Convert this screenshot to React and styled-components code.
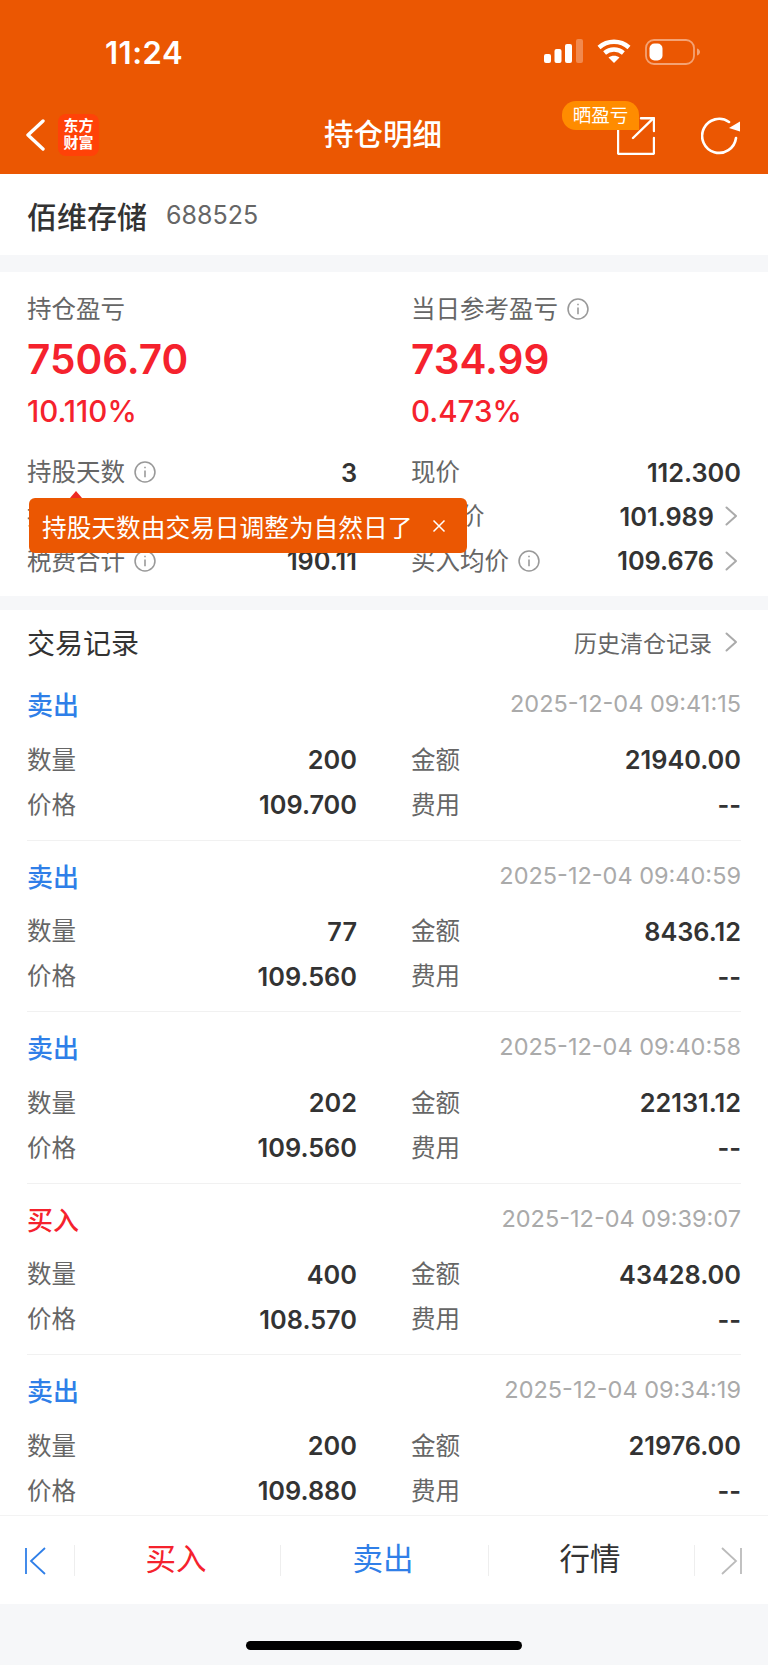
import React from 'react';
import styled, { createGlobalStyle } from 'styled-components';

const GlobalStyle = createGlobalStyle`
  html, body {
    margin: 0;
    padding: 0;
    background: #f6f7f9;
    font-family: Inter, "Noto Sans CJK SC", sans-serif;
  }
  * { box-sizing: border-box; }
`;

const Page = styled.div`
  width: 768px;
  height: 1665px;
  overflow: hidden;
  background: #f6f7f9;
  display: flex;
  flex-direction: column;
`;

const Header = styled.header`
  height: 174px;
  background: #eb5702;
  color: #fff;
  flex: none;
`;

const StatusBar = styled.div`
  height: 94px;
  display: flex;
  align-items: flex-start;
  justify-content: space-between;
  padding: 36px 67px 0 105px;
`;

const Clock = styled.div`
  font-size: 31px;
  line-height: 34px;
  font-weight: 600;
  letter-spacing: 0.5px;
`;

const StatusIcons = styled.div`
  display: flex;
  align-items: flex-start;
  gap: 14px;
  padding-top: 3px;
`;

const Nav = styled.div`
  height: 80px;
  display: grid;
  grid-template-columns: 1fr auto 1fr;
  align-items: center;
  padding: 0 27px 0 25px;
`;

const NavLeft = styled.div`
  display: flex;
  align-items: center;
  gap: 13px;
  margin-top: 2px;
`;

const Logo = styled.div`
  width: 41px;
  height: 42px;
  border-radius: 8px;
  background: #ff4208;
  color: #fff;
  font-size: 15px;
  line-height: 17px;
  font-weight: 700;
  text-align: center;
  padding-top: 3px;
`;

const Title = styled.div`
  font-size: 29.5px;
  line-height: 40px;
  font-weight: 500;
`;

const NavRight = styled.div`
  display: flex;
  justify-content: flex-end;
  align-items: center;
  gap: 46px;
  margin-top: 4px;
`;

const ShareBox = styled.div`
  position: relative;
  width: 38px;
  height: 38px;
`;

const Badge = styled.span`
  position: absolute;
  left: -55px;
  top: -16px;
  width: 77px;
  height: 29px;
  background: #ff8c00;
  border-radius: 14px 14px 0 14px;
  font-size: 18.5px;
  line-height: 28px;
  text-align: center;
`;

const StockRow = styled.div`
  height: 81px;
  background: #fff;
  display: flex;
  align-items: center;
  gap: 19px;
  padding: 0 27px;
  flex: none;
`;

const StockName = styled.div`
  font-size: 30px;
  font-weight: 500;
  color: #333;
`;

const StockCode = styled.div`
  font-size: 25px;
  color: #666;
`;

const Summary = styled.section`
  position: relative;
  height: 324px;
  margin-top: 17px;
  background: #fff;
  padding: 19px 27px 0;
  flex: none;
`;

const Columns = styled.div`
  display: grid;
  grid-template-columns: 330px 330px;
  column-gap: 54px;
`;

const Label = styled.div`
  display: flex;
  align-items: center;
  gap: 9px;
  font-size: 24.5px;
  line-height: 36px;
  color: #666;
`;

const BigNumber = styled.div`
  font-size: 40.5px;
  line-height: 60px;
  margin-top: 3px;
  font-weight: 600;
  color: #f5222d;
`;

const Percent = styled.div`
  font-size: 29.5px;
  line-height: 36px;
  margin-top: 3px;
  font-weight: 500;
  color: #f5222d;
`;

const StatGrid = styled(Columns)`
  margin-top: 21px;
`;

const StatRow = styled.div`
  height: 44.25px;
  display: flex;
  align-items: center;
  justify-content: space-between;
`;

const Value = styled.div`
  display: flex;
  align-items: center;
  gap: 11px;
  font-size: 25.3px;
  font-weight: 600;
  color: #333;
`;

const Tooltip = styled.div`
  position: absolute;
  left: 29px;
  top: 226px;
  width: 438px;
  height: 55px;
  border-radius: 6px;
  background: #eb5702;
  color: #fff;
  font-size: 24.7px;
  display: flex;
  align-items: center;
  justify-content: space-between;
  padding: 0 21px 0 13px;

  &::before {
    content: '';
    position: absolute;
    left: 41px;
    top: -7px;
    border-left: 6px solid transparent;
    border-right: 6px solid transparent;
    border-bottom: 7px solid #ee2a22;
  }
`;

const Records = styled.section`
  flex: 1;
  min-height: 0;
  margin-top: 14px;
  background: #fff;
  padding: 0 27px;
  overflow: hidden;
`;

const RecordsHead = styled.div`
  height: 59px;
  padding-top: 5px;
  display: flex;
  align-items: center;
  justify-content: space-between;
`;

const RecordsTitle = styled.div`
  font-size: 28px;
  color: #333;
`;

const HistoryLink = styled.div`
  display: flex;
  align-items: center;
  gap: 13px;
  font-size: 23px;
  color: #666;
`;

const Record = styled.div`
  height: 171.5px;
  padding-top: 20px;
  border-bottom: 1px solid ${props => (props.$last ? 'transparent' : '#f1f1f1')};
`;

const RecordTop = styled.div`
  height: 29px;
  display: flex;
  align-items: center;
  justify-content: space-between;
  margin-bottom: 19.7px;
`;

const SideTag = styled.div`
  font-size: 26px;
  font-weight: 500;
  color: ${props => (props.$buy ? '#f5222d' : '#2f7fe8')};
`;

const Stamp = styled.div`
  font-size: 23.5px;
  color: #aaa;
`;

const RecordCell = styled.div`
  height: 44.6px;
  display: flex;
  align-items: center;
  justify-content: space-between;
`;

const Footer = styled.footer`
  height: 89px;
  flex: none;
  background: #fff;
  border-top: 1px solid #f3f3f3;
  display: grid;
  grid-template-columns: 74px 206px 208px 206px 1fr;
  align-items: center;
  padding-top: 1px;
`;

const FooterItem = styled.div`
  height: 31px;
  display: flex;
  align-items: center;
  justify-content: center;
  font-size: 30.5px;
  color: ${props => props.$color || '#333'};
  border-left: ${props => (props.$first ? 'none' : '1px solid #eeeeee')};
`;

const FooterLabel = styled.span`
  margin: 0 3px 8px 0;
`;

const FirstIconWrap = styled.span`
  display: flex;
  margin-right: 4px;
`;

const HomeArea = styled.div`
  height: 61px;
  flex: none;
  padding-top: 37px;
`;

const HomeBar = styled.div`
  width: 276px;
  height: 9px;
  margin-left: 246px;
  border-radius: 5px;
  background: #000;
`;

const ChevronWrap = styled.span`
  display: flex;
  margin-right: 3px;
`;

const Signal = () => (
  <svg width="39" height="24" viewBox="0 0 39 24">
    <rect x="0" y="15" width="7" height="9" rx="2" fill="#fff" />
    <rect x="10.5" y="10" width="7" height="14" rx="2" fill="#fff" />
    <rect x="21" y="5" width="7" height="19" rx="2" fill="#fff" />
    <rect x="32" y="0" width="7" height="24" rx="2" fill="#fff" opacity="0.3" />
  </svg>
);

const Wifi = () => (
  <svg width="34" height="24" viewBox="0 0 34 24" fill="none" stroke="#fff" strokeWidth="4.4">
    <path d="M2 8.5C10.5 0.8 23.5 0.8 32 8.5" />
    <path d="M7.6 14C13 9.4 21 9.4 26.4 14" />
    <path d="M17 24L11.5 18.6C14.6 16 19.4 16 22.5 18.6Z" fill="#fff" stroke="none" />
  </svg>
);

const Battery = () => (
  <svg width="56" height="26" viewBox="0 0 56 26" fill="none">
    <rect x="1" y="1" width="48" height="24" rx="8" stroke="#fff" strokeOpacity="0.45" strokeWidth="1.8" />
    <rect x="4.5" y="4.5" width="13" height="17" rx="5" fill="#fff" />
    <path d="M52 9.5c2 .6 3 2 3 3.5s-1 2.9-3 3.5z" fill="#fff" fillOpacity="0.45" />
  </svg>
);

const BackIcon = () => (
  <svg width="20" height="32" viewBox="0 0 20 32" fill="none" stroke="#fff" strokeWidth="3.4" strokeLinecap="round" strokeLinejoin="round">
    <path d="M18 2L3 16L18 30" />
  </svg>
);

const ShareIcon = () => (
  <svg width="38" height="38" viewBox="0 0 38 38" fill="none" stroke="#fff" strokeWidth="2.4" strokeLinecap="round" strokeLinejoin="round">
    <path d="M1 10V35.5a1.5 1.5 0 0 0 1.5 1.5H35.5a1.5 1.5 0 0 0 1.5-1.5V21" />
    <path d="M16 21L36.5 1.2" />
    <path d="M24 1.2H37V14" />
  </svg>
);

const RefreshIcon = () => (
  <svg width="40" height="38" viewBox="0 0 40 38" fill="none">
    <path d="M35 21A17 17 0 1 1 28 5" stroke="#fff" strokeWidth="2.6" strokeLinecap="round" />
    <path d="M39 4.5V14.5L28 11Z" fill="#fff" />
  </svg>
);

const InfoIcon = ({ size = 22 }) => (
  <svg width={size} height={size} viewBox="0 0 21 21" fill="none" stroke="#999" strokeWidth="1.5">
    <circle cx="10.5" cy="10.5" r="9.5" />
    <path d="M10.5 9V15.5" />
    <path d="M10.5 5.4V7" />
  </svg>
);

const Chevron = () => (
  <ChevronWrap>
    <svg width="13" height="20" viewBox="0 0 13 20" fill="none" stroke="#aaa" strokeWidth="2" strokeLinecap="round" strokeLinejoin="round">
      <path d="M1.5 1.5L11 10L1.5 18.5" />
    </svg>
  </ChevronWrap>
);

const CloseIcon = () => (
  <svg width="14" height="14" viewBox="0 0 14 14" fill="none" stroke="#fff" strokeWidth="1.5">
    <path d="M1.5 1.5L12.5 12.5M12.5 1.5L1.5 12.5" />
  </svg>
);

const FirstIcon = () => (
  <FirstIconWrap>
    <svg width="21" height="28" viewBox="0 0 21 28" fill="none" stroke="#2f7fe8" strokeWidth="1.8">
      <path d="M1 1V27" />
      <path d="M20 1L6 14L20 27" />
    </svg>
  </FirstIconWrap>
);

const LastIcon = () => (
  <svg width="21" height="28" viewBox="0 0 21 28" fill="none" stroke="#bbb" strokeWidth="1.8">
    <path d="M20 1V27" />
    <path d="M1 1L15 14L1 27" />
  </svg>
);

const records = [
  { side: '卖出', time: '2025-12-04 09:41:15', qty: '200', amount: '21940.00', price: '109.700' },
  { side: '卖出', time: '2025-12-04 09:40:59', qty: '77', amount: '8436.12', price: '109.560' },
  { side: '卖出', time: '2025-12-04 09:40:58', qty: '202', amount: '22131.12', price: '109.560' },
  { side: '买入', time: '2025-12-04 09:39:07', qty: '400', amount: '43428.00', price: '108.570' },
  { side: '卖出', time: '2025-12-04 09:34:19', qty: '200', amount: '21976.00', price: '109.880' },
];

export default function App() {
  return (
    <Page>
      <GlobalStyle />
      <Header>
        <StatusBar>
          <Clock>11:24</Clock>
          <StatusIcons>
            <Signal />
            <Wifi />
            <Battery />
          </StatusIcons>
        </StatusBar>
        <Nav>
          <NavLeft>
            <BackIcon />
            <Logo>东方<br />财富</Logo>
          </NavLeft>
          <Title>持仓明细</Title>
          <NavRight>
            <ShareBox>
              <ShareIcon />
              <Badge>晒盈亏</Badge>
            </ShareBox>
            <RefreshIcon />
          </NavRight>
        </Nav>
      </Header>

      <StockRow>
        <StockName>佰维存储</StockName>
        <StockCode>688525</StockCode>
      </StockRow>

      <Summary>
        <Columns>
          <div>
            <Label>持仓盈亏</Label>
            <BigNumber>7506.70</BigNumber>
            <Percent>10.110%</Percent>
          </div>
          <div>
            <Label>当日参考盈亏 <InfoIcon /></Label>
            <BigNumber>734.99</BigNumber>
            <Percent>0.473%</Percent>
          </div>
        </Columns>
        <StatGrid>
          <div>
            <StatRow>
              <Label>持股天数 <InfoIcon /></Label>
              <Value>3</Value>
            </StatRow>
            <StatRow>
              <Label>持仓数量</Label>
              <Value>--</Value>
            </StatRow>
            <StatRow>
              <Label>税费合计 <InfoIcon /></Label>
              <Value>190.11</Value>
            </StatRow>
          </div>
          <div>
            <StatRow>
              <Label>现价</Label>
              <Value>112.300</Value>
            </StatRow>
            <StatRow>
              <Label>成本价</Label>
              <Value>101.989 <Chevron /></Value>
            </StatRow>
            <StatRow>
              <Label>买入均价 <InfoIcon /></Label>
              <Value>109.676 <Chevron /></Value>
            </StatRow>
          </div>
        </StatGrid>
        <Tooltip>
          持股天数由交易日调整为自然日了
          <CloseIcon />
        </Tooltip>
      </Summary>

      <Records>
        <RecordsHead>
          <RecordsTitle>交易记录</RecordsTitle>
          <HistoryLink>历史清仓记录 <Chevron /></HistoryLink>
        </RecordsHead>
        {records.map((r, i) => (
          <Record key={r.time} $last={i === records.length - 1}>
            <RecordTop>
              <SideTag $buy={r.side === '买入'}>{r.side}</SideTag>
              <Stamp>{r.time}</Stamp>
            </RecordTop>
            <Columns>
              <RecordCell><Label>数量</Label><Value>{r.qty}</Value></RecordCell>
              <RecordCell><Label>金额</Label><Value>{r.amount}</Value></RecordCell>
              <RecordCell><Label>价格</Label><Value>{r.price}</Value></RecordCell>
              <RecordCell><Label>费用</Label><Value>--</Value></RecordCell>
            </Columns>
          </Record>
        ))}
      </Records>

      <Footer>
        <FooterItem $first><FirstIcon /></FooterItem>
        <FooterItem $color="#f5222d"><FooterLabel>买入</FooterLabel></FooterItem>
        <FooterItem $color="#2f7fe8"><FooterLabel>卖出</FooterLabel></FooterItem>
        <FooterItem><FooterLabel>行情</FooterLabel></FooterItem>
        <FooterItem><LastIcon /></FooterItem>
      </Footer>
      <HomeArea>
        <HomeBar />
      </HomeArea>
    </Page>
  );
}
